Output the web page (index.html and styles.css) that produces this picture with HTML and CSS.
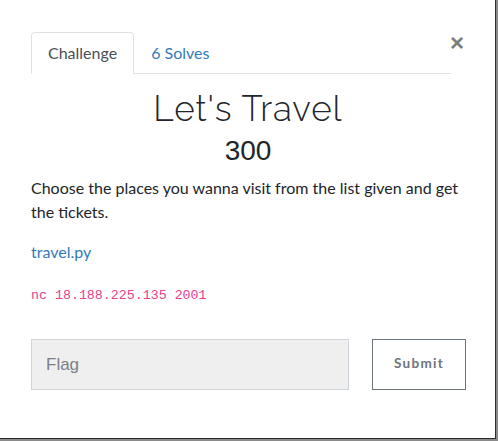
FILE: index.html
```html
<!DOCTYPE html>
<html>
<head>
<meta charset="utf-8">
<link rel="stylesheet" href="styles.css">
</head>
<body>
<div class="modal">
  <div class="modal-inner">
    <div class="header">
      <ul class="tabs">
        <li class="tab active">Challenge</li>
        <li class="tab link">6 Solves</li>
      </ul>
      <button class="close">&times;</button>
    </div>
    <h2 class="title">Let's Travel</h2>
    <h3 class="value">300</h3>
    <p class="desc">Choose the places you wanna visit from the list given and get the tickets.</p>
    <p class="file"><a href="#">travel.py</a></p>
    <p class="conn"><code>nc 18.188.225.135 2001</code></p>
    <div class="submit-row">
      <input class="flag" type="text" placeholder="Flag">
      <button class="submit">Submit</button>
    </div>
  </div>
</div>
</body>
</html>
```
FILE: styles.css
```css
html, body {
  margin: 0;
  padding: 0;
  background: #8a8a8a;
}
.modal {
  width: 495px;
  height: 438px;
  background: #fff;
  border-right: 1px solid #2b2b2b;
  border-bottom: 1px solid #2b2b2b;
  box-sizing: content-box;
}
.modal-inner {
  padding: 32px 30px 0 31px;
  font-family: Lato, "Noto Sans", sans-serif;
  color: #212529;
}
.header {
  display: flex;
  align-items: flex-start;
}
.tabs {
  list-style: none;
  margin: 0;
  padding: 0;
  display: flex;
  width: 420px;
  border-bottom: 1px solid #dee2e6;
}
.tab {
  font-size: 16px;
  line-height: 22px;
  padding: 9px 16px 9px 16px;
  border: 1px solid transparent;
  border-top-left-radius: 4px;
  border-top-right-radius: 4px;
  margin-bottom: -1px;
}
.tab.active {
  color: #495057;
  border-color: #dee2e6 #dee2e6 #fff;
  background: #fff;
}
.tab.link {
  color: #337ab7;
}
.close {
  margin: 0 0 0 -1px;
  padding: 0;
  border: 0;
  background: none;
  font-family: "Liberation Sans", Arial, sans-serif;
  font-size: 24px;
  font-weight: 700;
  line-height: 22px;
  color: #7d7d7d;
  width: 14px;
}
.title {
  margin: 14px 0 0;
  text-align: center;
  font-family: Raleway, Lato, sans-serif;
  font-weight: 300;
  font-size: 35px;
  letter-spacing: 1px;
  line-height: 42px;
  color: #212529;
}
.value {
  margin: 4px 0 0;
  text-align: center;
  font-family: "Liberation Sans", Arial, sans-serif;
  font-weight: 400;
  font-size: 28px;
  line-height: 34px;
  color: #212529;
}
.desc {
  margin: 8px 0 0;
  font-size: 16px;
  line-height: 24px;
  width: 440px;
}
.file {
  margin: 16px 0 0;
  font-size: 16px;
  line-height: 24px;
}
.file a {
  color: #337ab7;
  text-decoration: none;
}
.conn {
  margin: 17px 0 0;
  line-height: 24px;
}
.conn code {
  font-family: "Liberation Mono", "Courier New", monospace;
  font-size: 13.3px;
  color: #e83e8c;
}
.submit-row {
  display: flex;
  gap: 23px;
  margin-top: 31px;
}
.flag {
  flex: none;
  width: 318px;
  height: 51px;
  box-sizing: border-box;
  background: #efefef;
  border: 1px solid #ced4da;
  padding: 0 14px;
  font-family: "Liberation Sans", Arial, sans-serif;
  font-size: 17px;
  color: #495057;
  outline: none;
}
.flag::placeholder {
  color: #7b8087;
}
.submit {
  flex: none;
  width: 94px;
  height: 51px;
  box-sizing: border-box;
  padding: 0 0 3px;
  background: #fff;
  border: 1px solid #6c757d;
  color: #6c757d;
  font-family: Lato, sans-serif;
  font-weight: 700;
  font-size: 13.5px;
  letter-spacing: 1.3px;
}
```
